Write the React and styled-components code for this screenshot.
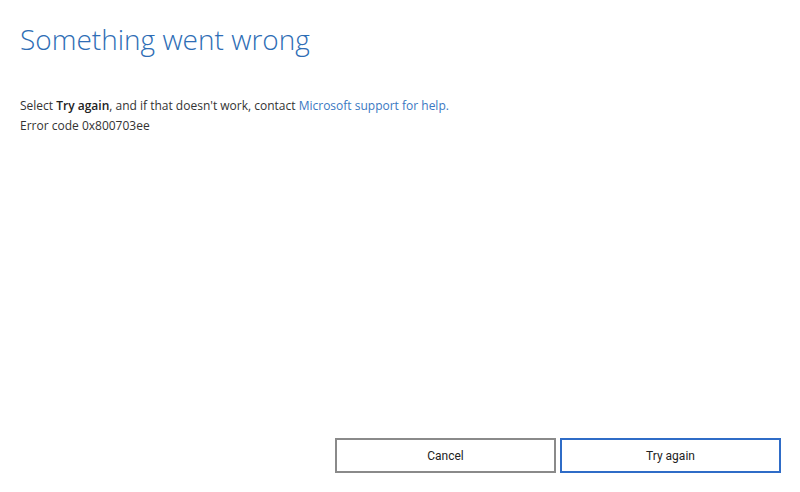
import React from "react";
import styled, { createGlobalStyle } from "styled-components";

const GlobalStyle = createGlobalStyle`
    html, body {
        margin: 0;
        padding: 0;
        background: #fff;
    }

    #root {
        height: 100vh;
    }
`;

const Page = styled.div`
    display: flex;
    flex-direction: column;
    height: 100%;
    box-sizing: border-box;
    padding: 20px 19px 19px 20px;
    font-family: "Open Sans", "Noto Sans", sans-serif;
    color: #222;
`;

const Title = styled.h1`
    margin: 0;
    font-family: "Open Sans", sans-serif;
    font-weight: 300;
    font-size: 28px;
    line-height: 38px;
    color: #2e6db5;
`;

const Message = styled.div`
    margin-top: 38px;
    font-size: 12px;
    line-height: 20px;
    color: #333;
`;

const Strong = styled.span`
    font-weight: 600;
    color: #222;
`;

const Link = styled.a`
    color: #3a78c2;
    text-decoration: none;
`;

const Footer = styled.div`
    margin-top: auto;
    display: flex;
    justify-content: flex-end;
    gap: 4px;
`;

const Button = styled.button`
    width: 221px;
    height: 35px;
    box-sizing: border-box;
    background: #fff;
    border: 2px solid ${props => props.primary ? "#2f6cc7" : "#8a8a8a"};
    font-family: Roboto, "Liberation Sans", sans-serif;
    font-size: 12px;
    color: #222;
    cursor: pointer;
`;

function App() {
    return (
        <>
            <GlobalStyle />
            <Page>
                <Title>Something went wrong</Title>
                <Message>
                    <div>
                        Select <Strong>Try again</Strong>, and if that doesn't work, contact{" "}
                        <Link href="#">Microsoft support for help.</Link>
                    </div>
                    <div>Error code 0x800703ee</div>
                </Message>
                <Footer>
                    <Button>Cancel</Button>
                    <Button primary>Try again</Button>
                </Footer>
            </Page>
        </>
    );
}

export default App;
